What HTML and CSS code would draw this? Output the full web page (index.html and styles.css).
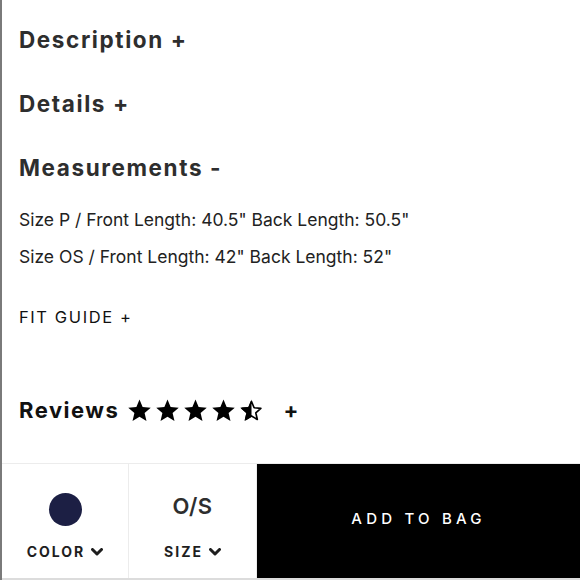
FILE: index.html
```html
<!DOCTYPE html>
<html>
<head>
<meta charset="utf-8">
<link rel="stylesheet" href="styles.css">
</head>
<body>
<div class="page">
  <main class="content">
    <h2 class="acc acc-first">Description +</h2>
    <h2 class="acc">Details +</h2>
    <h2 class="acc acc-open">Measurements -</h2>
    <p class="meas">Size P / Front Length: 40.5" Back Length: 50.5"</p>
    <p class="meas">Size OS / Front Length: 42" Back Length: 52"</p>
    <p class="fit">FIT GUIDE +</p>
    <div class="reviews">
      <span class="rev-title">Reviews</span>
      <span class="stars">
        <svg class="star" viewBox="0 0 24 24"><path d="M12 1.5l3 7.2 7.8.6-5.9 5.1 1.8 7.6L12 17.9 5.3 22l1.8-7.6-5.9-5.1 7.8-.6z"/></svg>
        <svg class="star" viewBox="0 0 24 24"><path d="M12 1.5l3 7.2 7.8.6-5.9 5.1 1.8 7.6L12 17.9 5.3 22l1.8-7.6-5.9-5.1 7.8-.6z"/></svg>
        <svg class="star" viewBox="0 0 24 24"><path d="M12 1.5l3 7.2 7.8.6-5.9 5.1 1.8 7.6L12 17.9 5.3 22l1.8-7.6-5.9-5.1 7.8-.6z"/></svg>
        <svg class="star" viewBox="0 0 24 24"><path d="M12 1.5l3 7.2 7.8.6-5.9 5.1 1.8 7.6L12 17.9 5.3 22l1.8-7.6-5.9-5.1 7.8-.6z"/></svg>
        <svg class="star" viewBox="0 0 24 24">
          <path class="half-outline" d="M12 3.4l2.5 6 6.5.5-4.9 4.3 1.5 6.4L12 17.2l-5.6 3.4 1.5-6.4-4.9-4.3 6.5-.5z"/>
          <path d="M12 1.5V17.9L5.3 22l1.8-7.6-5.9-5.1 7.8-.6z"/>
        </svg>
      </span>
      <span class="rev-plus">+</span>
    </div>
  </main>
  <footer class="bar">
    <div class="opt">
      <span class="swatch"></span>
      <span class="opt-label">COLOR <svg class="chev" viewBox="0 0 12 8"><polyline points="1.5,1.5 6,6 10.5,1.5"/></svg></span>
    </div>
    <div class="opt">
      <span class="size-val">O/S</span>
      <span class="opt-label">SIZE <svg class="chev" viewBox="0 0 12 8"><polyline points="1.5,1.5 6,6 10.5,1.5"/></svg></span>
    </div>
    <button class="add">ADD TO BAG</button>
  </footer>
</div>
</body>
</html>
```
FILE: styles.css
```css
html, body {
  margin: 0;
  padding: 0;
  background: #fff;
}
body {
  font-family: Inter, "Noto Sans", sans-serif;
  color: #2b2b2b;
}
.page {
  width: 580px;
  height: 580px;
  box-sizing: border-box;
  border-left: 2px solid #7a7a7a;
  display: flex;
  flex-direction: column;
  overflow: hidden;
}
.content {
  padding-left: 17px;
  flex: 1;
}
.acc {
  margin: 0;
  font-size: 22.5px;
  font-weight: 700;
  letter-spacing: 1.6px;
  line-height: 28px;
  height: 64px;
  color: #2e2e2e;
}
.acc-first {
  margin-top: 26px;
}
.acc-open {
  height: 47px;
}
.meas {
  margin: 0;
  font-size: 17.5px;
  letter-spacing: 0;
  line-height: 37px;
  color: #222;
}
.fit {
  margin: 30px 0 0;
  font-size: 16.5px;
  letter-spacing: 1.6px;
  line-height: 24px;
  color: #111;
}
.reviews {
  margin-top: 66px;
  display: flex;
  align-items: center;
  height: 30px;
}
.rev-title {
  font-size: 22px;
  font-weight: 700;
  letter-spacing: 1.5px;
  color: #111;
}
.stars {
  display: flex;
  gap: 3px;
  margin-left: 8px;
}
.star {
  width: 25px;
  height: 25px;
  fill: #000;
}
.half-outline {
  fill: none;
  stroke: #000;
  stroke-width: 1.6;
  stroke-linejoin: round;
}
.rev-plus {
  margin-left: 19px;
  font-size: 22px;
  font-weight: 700;
  color: #111;
}
.bar {
  height: 114px;
  display: flex;
  border-top: 1px solid #ececec;
  border-bottom: 2px solid #dcdcdc;
}
.opt {
  width: 127px;
  border-right: 1px solid #ececec;
  display: flex;
  flex-direction: column;
  align-items: center;
  justify-content: flex-end;
  padding-bottom: 18px;
  box-sizing: border-box;
}
.opt + .opt {
  width: 128px;
}
.swatch {
  width: 33px;
  height: 33px;
  border-radius: 50%;
  background: #1c1f44;
  margin-bottom: 18px;
}
.size-val {
  font-size: 22px;
  font-weight: 600;
  letter-spacing: 0.5px;
  color: #2e2e2e;
  line-height: 33px;
  margin-bottom: 21px;
}
.opt-label {
  font-size: 14px;
  font-weight: 700;
  letter-spacing: 2px;
  color: #1e1e1e;
  display: flex;
  align-items: center;
  gap: 6px;
  line-height: 16px;
}
.chev {
  width: 12px;
  height: 8px;
  fill: none;
  stroke: #1e1e1e;
  stroke-width: 3;
  stroke-linecap: round;
  stroke-linejoin: round;
}
.add {
  flex: 1;
  background: #000;
  color: #fff;
  border: none;
  margin: 0;
  font-family: Inter, "Noto Sans", sans-serif;
  font-size: 15px;
  font-weight: 500;
  letter-spacing: 4.2px;
  padding: 0 0 6px 0;
}
```
